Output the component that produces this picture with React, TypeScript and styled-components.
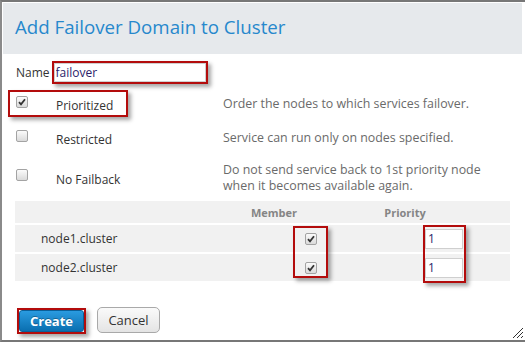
import React from "react";
import styled, { createGlobalStyle } from "styled-components";

const Global = createGlobalStyle`
  html, body { margin: 0; padding: 0; background: #fff; }
  body { font-family: "Open Sans", "Liberation Sans", sans-serif; }
  * { box-sizing: border-box; }
`;

const RED = "#b30c0c";
const SHADOW = "3px 3px 4px rgba(0,0,0,0.35)";
const INK = "#2b1d6a";

const Window = styled.div`
  position: relative;
  width: 525px;
  height: 342px;
  overflow: hidden;
  background: #fff;
  border-top: 2px solid #777;
  border-left: 2px solid #8a8a8a;
  border-bottom: 2px solid #777;
`;

const Header = styled.div`
  margin: 1px 3px 0 1px;
  height: 51px;
  padding: 12px 0 0 12px;
  background: #e6e9ec;
`;

const Title = styled.h1`
  margin: 0;
  font-family: "Open Sans", sans-serif;
  font-weight: 400;
  font-size: 18.7px;
  line-height: 24px;
  color: #2688cc;
`;

const Body = styled.div`
  padding: 0 15px 0 13px;
  font-size: 12px;
  color: #333;
`;

const NameRow = styled.div`
  margin-top: 7px;
  height: 23px;
  display: flex;
  align-items: center;
  gap: 2px;
  padding-left: 1px;
`;

const NameLabel = styled.label`
  font-size: 12px;
  color: #333;
`;

const Frame = styled.div<{ $on?: boolean }>`
  border: 2px solid ${(p) => (p.$on ? RED : "transparent")};
  box-shadow: ${(p) => (p.$on ? SHADOW : "none")};
`;

const NameFrame = styled(Frame)`
  width: 156px;
  height: 23px;
`;

const TextInput = styled.input`
  display: block;
  width: 100%;
  height: 100%;
  margin: 0;
  border: 1px solid #cfcfcf;
  padding: 0 0 0 1px;
  font-family: "Open Sans", sans-serif;
  font-size: 12px;
  color: ${INK};
  -webkit-text-fill-color: ${INK};
  background: #fff;
  outline: none;
`;

const Options = styled.div`
  margin-top: 2px;
`;

const OptionRow = styled.div<{ $h: number }>`
  display: grid;
  grid-template-columns: 120px 1fr;
  column-gap: 88px;
  align-items: center;
  height: ${(p) => p.$h}px;
`;

const LabelCell = styled(Frame)`
  margin-left: -7px;
  width: 120px;
  height: 27px;
  display: flex;
  align-items: center;
  padding-left: 6px;
  gap: 28px;
`;

const OptionLabel = styled.span`
  font-size: 12px;
  color: #333;
  padding-top: 3px;
`;

const Desc = styled.div`
  font-size: 12.4px;
  line-height: 15.5px;
  color: #6a6a6a;
`;

const Box = styled.span<{ $lift?: number }>`
  width: 12px;
  height: 12px;
  flex: none;
  display: inline-flex;
  align-items: center;
  justify-content: center;
  border: 1px solid #a3a3a3;
  border-radius: 2px;
  background: linear-gradient(#fbfbfb, #dadada);
  margin-bottom: ${(p) => p.$lift ?? 0}px;
`;

const Check = ({ checked, lift }: { checked?: boolean; lift?: number }) => (
  <Box $lift={lift}>
    {checked && (
      <svg width="8" height="8" viewBox="0 0 8 8">
        <path d="M1 4.2 L3 6.3 L7 1.2" stroke="#333" strokeWidth="1.8" fill="none" />
      </svg>
    )}
  </Box>
);

const TableWrap = styled.div`
  position: relative;
  display: flex;
  flex-direction: column;
  gap: 2px;
`;

const TRow = styled.div<{ $h: number }>`
  display: grid;
  grid-template-columns: 209px 100px 162px 1fr;
  align-items: center;
  height: ${(p) => p.$h}px;
  background: #f1f1f1;
`;

const TH = styled.div`
  text-align: center;
  font-size: 11px;
  font-weight: 700;
  color: #858585;
`;

const TD = styled.div<{ $pad: number }>`
  display: flex;
  align-items: center;
  padding-left: ${(p) => p.$pad}px;
  font-size: 12px;
  color: #333;
`;

const PriorityInput = styled.input`
  width: 38px;
  height: 20px;
  margin: 0;
  border: 1px solid #cfcfcf;
  padding: 0 0 0 2px;
  font-family: "Open Sans", sans-serif;
  font-size: 12px;
  color: ${INK};
  -webkit-text-fill-color: ${INK};
  background: #fff;
  outline: none;
`;

const Mark = styled.div<{ $l: number; $t: number; $w: number; $hh: number }>`
  position: absolute;
  left: ${(p) => p.$l}px;
  top: ${(p) => p.$t}px;
  width: ${(p) => p.$w}px;
  height: ${(p) => p.$hh}px;
  border: 2px solid ${RED};
  box-shadow: ${SHADOW};
  pointer-events: none;
`;

const Buttons = styled.div`
  margin-top: 26px;
  display: flex;
  align-items: flex-start;
  gap: 11px;
  padding-left: 2px;
`;

const CreateFrame = styled(Frame)`
  margin-top: 1px;
`;

const PrimaryButton = styled.button`
  display: block;
  width: 65px;
  height: 22px;
  margin: 0;
  padding: 0;
  border: 1px solid #0b5f98;
  border-radius: 3px;
  background: linear-gradient(#2a9be0, #0a6fb0);
  color: #fff;
  font-family: "Open Sans", sans-serif;
  font-weight: 700;
  font-size: 13px;
  text-shadow: 0 -1px 0 rgba(0,0,0,0.3);
`;

const SecondaryButton = styled.button`
  width: 63px;
  height: 26px;
  margin: 0;
  padding: 0;
  border: 1px solid #a9a9a9;
  border-radius: 5px;
  background: linear-gradient(#fafafa, #e4e4e4);
  color: #333;
  font-family: "Open Sans", sans-serif;
  font-size: 13px;
`;

const Grip = styled.svg`
  position: absolute;
  right: 1px;
  bottom: 1px;
`;

export default function App() {
  return (
    <>
      <Global />
      <Window>
        <Header>
          <Title>Add Failover Domain to Cluster</Title>
        </Header>
        <Body>
          <NameRow>
            <NameLabel>Name</NameLabel>
            <NameFrame $on>
              <TextInput defaultValue="failover" />
            </NameFrame>
          </NameRow>
          <Options>
            <OptionRow $h={35}>
              <LabelCell $on>
                <Check checked lift={4} />
                <OptionLabel>Prioritized</OptionLabel>
              </LabelCell>
              <Desc>Order the nodes to which services failover.</Desc>
            </OptionRow>
            <OptionRow $h={33}>
              <LabelCell>
                <Check lift={4} />
                <OptionLabel>Restricted</OptionLabel>
              </LabelCell>
              <Desc>Service can run only on nodes specified.</Desc>
            </OptionRow>
            <OptionRow $h={47}>
              <LabelCell>
                <Check lift={5} />
                <OptionLabel>No Failback</OptionLabel>
              </LabelCell>
              <Desc>
                Do not send service back to 1st priority node
                <br />
                when it becomes available again.
              </Desc>
            </OptionRow>
          </Options>
          <TableWrap>
            <TRow $h={22}>
              <TH />
              <TH>Member</TH>
              <TH>Priority</TH>
              <TH />
            </TRow>
            {["node1.cluster", "node2.cluster"].map((n) => (
              <TRow $h={27} key={n}>
                <TD $pad={26}>{n}</TD>
                <TD $pad={81}>
                  <Check checked />
                </TD>
                <TD $pad={101}>
                  <PriorityInput defaultValue="1" />
                </TD>
                <TD $pad={0} />
              </TRow>
            ))}
            <Mark $l={278} $t={25} $w={35} $hh={52} />
            <Mark $l={408} $t={24} $w={43} $hh={58} />
          </TableWrap>
          <Buttons>
            <CreateFrame $on>
              <PrimaryButton>Create</PrimaryButton>
            </CreateFrame>
            <SecondaryButton>Cancel</SecondaryButton>
          </Buttons>
        </Body>
        <Grip width="12" height="12" viewBox="0 0 12 12">
          <path d="M11 1 L1 11 M11 5 L5 11 M11 9 L9 11" stroke="#333" strokeWidth="1" />
        </Grip>
      </Window>
    </>
  );
}
